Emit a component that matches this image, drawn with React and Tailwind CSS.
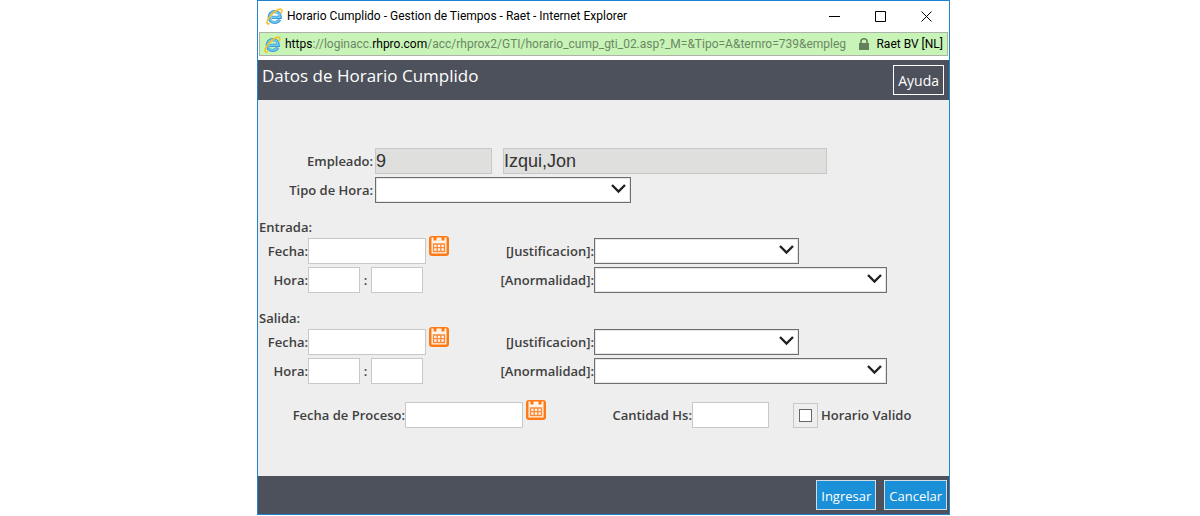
import { useId } from 'react';

function IeLogo() {
  return (
    <svg width="17" height="17" viewBox="0 0 17 17" fill="none" aria-hidden="true" className="shrink-0">
      <path d="M13.700 11.600C12.700 13.500 10.900 14.500 8.700 14.500C5.500 14.500 3.200 12.200 3.200 9C3.200 5.800 5.600 3.600 8.700 3.600C12 3.600 14.300 5.800 14.300 9.400H5.500" stroke="#3d9ad6" strokeWidth="3.200" />
      <path d="M13.300 11.600C12.400 13.300 10.800 14.200 8.700 14.200C5.700 14.200 3.600 12.100 3.600 9C3.600 6 5.700 3.900 8.700 3.900C11.700 3.900 13.900 5.900 13.900 9.300H5.500" stroke="#6fcbf3" strokeWidth="1.600" />
      <path d="M3 15.800C0.600 16.600 0.200 14 2.600 10.200C5.300 6 10.500 1.600 14 1.200C16 1 16.200 2.700 15.200 4.700" stroke="#f2c32b" strokeWidth="1.700" strokeLinecap="round" />
    </svg>
  );
}

function CalendarButton({ label }) {
  return (
    <button type="button" aria-label={label} className="-mt-0.5 ml-[3px] self-start">
      <svg width="20" height="20" viewBox="0 0 20 20" aria-hidden="true">
        <rect width="20" height="20" rx="3" fill="#ff7a14" />
        <path d="M2.500 1.500h2v3h3v-3h5v3h3v-3h2V17a.5.5 0 0 1-.5.500H3a.5.5 0 0 1-.5-.5z" fill="#fff3e8" />
        <path d="M4.500 8h11v7.500h-11zM4.500 11.700h11M8.200 8v7.500M11.800 8v7.500" fill="none" stroke="#fa8a38" strokeWidth="1.300" />
      </svg>
    </button>
  );
}

function Select({ id, className }) {
  return (
    <div className={`relative h-[26px] ${className}`}>
      <select id={id} className="block h-full w-full appearance-none border border-[#6e6e6e] bg-white px-1 shadow-[inset_0_0_0_1px_#e6e6e6]">
        <option value=""></option>
      </select>
      <svg width="15" height="10" viewBox="0 0 15 10" fill="none" aria-hidden="true" className="pointer-events-none absolute top-[7px] right-[5px]">
        <path d="M1 1L7.500 7.500L14 1" stroke="#222" strokeWidth="2.400" />
      </svg>
    </div>
  );
}

const inputClass = 'h-[26px] border border-[#c8c8c8] bg-white px-0.5';
const labelClass = 'pt-0.5 text-right';

function Registro({ titulo }) {
  const id = useId();
  return (
    <fieldset>
      <legend className="px-px pb-0.5 leading-[18px]">{titulo}:</legend>
      <div className="grid grid-cols-[50px_186px_100px_1fr] items-center gap-y-[3px]">
        <label htmlFor={`${id}-fecha`} className={labelClass}>Fecha:</label>
        <div className="flex">
          <input id={`${id}-fecha`} type="text" className={`${inputClass} w-[118px]`} />
          <CalendarButton label={`Fecha de ${titulo}`} />
        </div>
        <label htmlFor={`${id}-just`} className={labelClass}>[Justificacion]:</label>
        <Select id={`${id}-just`} className="w-[205px]" />

        <label htmlFor={`${id}-hora`} className={labelClass}>Hora:</label>
        <div className="flex items-center">
          <input id={`${id}-hora`} type="text" className={`${inputClass} w-[52px]`} />
          <span className="w-[11px] pt-0.5 text-center">:</span>
          <input type="text" aria-label="Minutos" className={`${inputClass} w-[52px]`} />
        </div>
        <label htmlFor={`${id}-anor`} className={labelClass}>[Anormalidad]:</label>
        <Select id={`${id}-anor`} className="w-[293px]" />
      </div>
    </fieldset>
  );
}

export default function App() {
  return (
    <div className="bg-white pl-[7px] font-['Open_Sans',sans-serif]">
      <main className="mx-auto max-w-[693px] border border-[#1f83cf] bg-white">
        <div className="flex h-[30px] items-center pl-2 font-['Roboto',sans-serif]">
          <IeLogo />
          <span className="ml-1 text-xs text-black">Horario Cumplido - Gestion de Tiempos - Raet - Internet Explorer</span>
          <div className="ml-auto flex">
            <button type="button" aria-label="Minimizar" className="grid w-[46px] place-items-center">
              <svg width="11" height="11" viewBox="0 0 11 11" stroke="#000"><path d="M0 5.500h11" /></svg>
            </button>
            <button type="button" aria-label="Maximizar" className="grid w-[46px] place-items-center">
              <svg width="11" height="11" viewBox="0 0 11 11" fill="none" stroke="#000"><path d="M.5.5h10v10H.5z" /></svg>
            </button>
            <button type="button" aria-label="Cerrar" className="grid w-[46px] place-items-center">
              <svg width="11" height="11" viewBox="0 0 11 11" stroke="#000"><path d="M.5.5l10 10M10.500.5l-10 10" /></svg>
            </button>
          </div>
        </div>

        <div className="mx-px mt-px mb-1 flex h-6 items-center border border-[#adb3aa] bg-[#c8f4b8] px-1 font-['Roboto',sans-serif] text-xs text-black">
          <IeLogo />
          <div className="ml-1 whitespace-nowrap text-[#6c8764]">
            <span className="text-black">https</span>://loginacc.<span className="text-black">rhpro.com</span>/acc/rhprox2/GTI/horario_cump_gti_02.asp?_M=&amp;Tipo=A&amp;ternro=739&amp;empleg
          </div>
          <svg width="10" height="12" viewBox="0 0 10 12" aria-hidden="true" className="mr-[7px] ml-auto">
            <path d="M0 5h10v7H0z" fill="#65805c" />
            <path d="M2 6V3.500a3 2.700 0 0 1 6 0V6" fill="none" stroke="#65805c" strokeWidth="1.600" />
          </svg>
          <span>Raet BV [NL]</span>
        </div>

        <header className="flex h-10 justify-between bg-[#4d515c] pr-[5px] pl-1 text-white">
          <h1 className="text-[17px] leading-8">Datos de Horario Cumplido</h1>
          <button type="button" className="mt-[5px] h-[30px] border border-white px-1 pt-0.5 text-sm">Ayuda</button>
        </header>

        <form className="bg-[#eee] pt-12 pb-12 text-[13px] font-semibold text-[#404040]">
          <div className="grid grid-cols-[117px_1fr] items-center gap-y-[3px]">
            <label htmlFor="empleado" className={`${labelClass} pr-0.5`}>Empleado:</label>
            <div className="flex gap-[11px] font-['Liberation_Sans',sans-serif] text-lg font-normal text-[#333]">
              <input id="empleado" type="text" readOnly defaultValue="9" className="h-[26px] w-[117px] border border-[#c8c8c8] bg-[#dfdfdd]" />
              <input type="text" readOnly aria-label="Nombre" defaultValue="Izqui,Jon" className="h-[26px] w-[324px] border border-[#c8c8c8] bg-[#dfdfdd]" />
            </div>
            <label htmlFor="tipo" className={`${labelClass} pr-0.5`}>Tipo de Hora:</label>
            <Select id="tipo" className="w-[256px]" />
          </div>

          <div className="mt-[15px] space-y-4">
            <Registro titulo="Entrada" />
            <Registro titulo="Salida" />
          </div>

          <div className="mt-[18px] flex items-center">
            <label htmlFor="proceso" className={`${labelClass} w-[147px]`}>Fecha de Proceso:</label>
            <input id="proceso" type="text" className={`${inputClass} w-[118px]`} />
            <CalendarButton label="Fecha de Proceso" />
            <label htmlFor="cantidad" className={`${labelClass} w-[146px]`}>Cantidad Hs:</label>
            <input id="cantidad" type="text" className={`${inputClass} w-[77px]`} />
            <span className="ml-6 grid size-[25px] place-items-center border border-[#c8c8c8]">
              <input id="valido" type="checkbox" className="size-[13px] appearance-none border border-[#666] bg-white" />
            </span>
            <label htmlFor="valido" className={`${labelClass} ml-[3px]`}>Horario Valido</label>
          </div>
        </form>

        <footer className="flex h-[38px] justify-end gap-2 bg-[#4d515c] pt-1 pr-0.5 text-[13px] text-white">
          <button type="button" className="h-[30px] border border-[#d5dbe2] bg-[#1a90d8] px-1 pt-1">Ingresar</button>
          <button type="button" className="h-[30px] border border-[#d5dbe2] bg-[#1a90d8] px-1 pt-1">Cancelar</button>
        </footer>
      </main>
    </div>
  );
}
